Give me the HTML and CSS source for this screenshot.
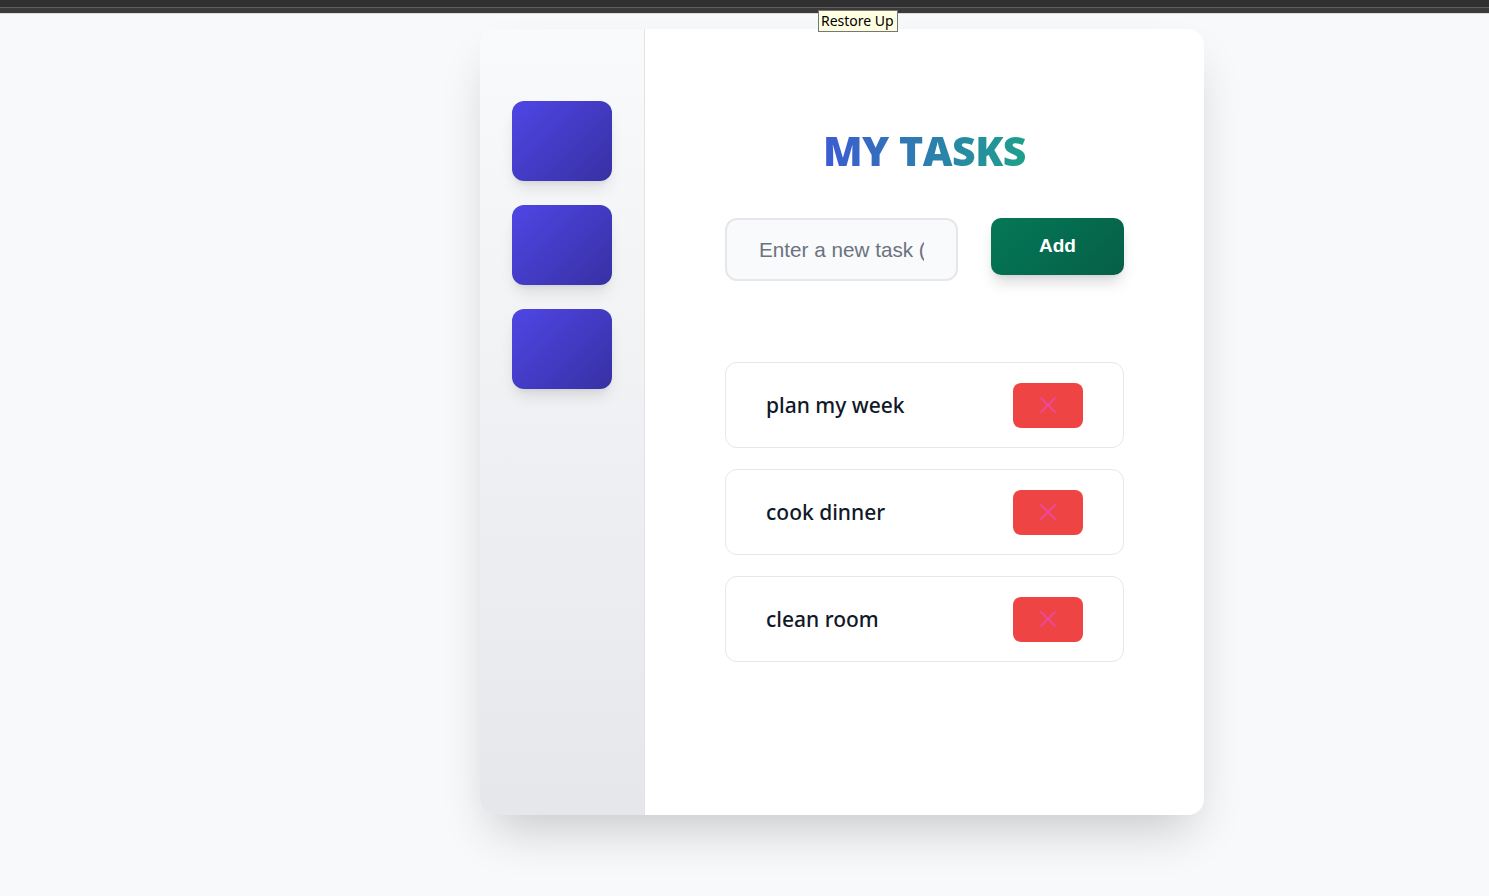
FILE: index.html
```html
<!DOCTYPE html>
<html lang="en">
<head>
<meta charset="utf-8">
<title>My Tasks</title>
<link rel="stylesheet" href="styles.css">
</head>
<body>
<div class="topbar"><div class="topbar-line"></div></div>
<div class="tooltip">Restore Up</div>
<div class="page">
  <div class="card">
    <aside class="sidebar">
      <div class="tile"></div>
      <div class="tile"></div>
      <div class="tile"></div>
    </aside>
    <main class="main">
      <h1 class="title">MY TASKS</h1>
      <div class="add-row">
        <input class="task-input" type="text" placeholder="Enter a new task (">
        <button class="add-btn">Add</button>
      </div>
      <ul class="tasks">
        <li class="task"><span class="task-text">plan my week</span><button class="del-btn"><svg width="18" height="18" viewBox="0 0 18 18"><path d="M2 2L16 16M16 2L2 16" stroke="#ec4899" stroke-width="2" stroke-linecap="round"/></svg></button></li>
        <li class="task"><span class="task-text">cook dinner</span><button class="del-btn"><svg width="18" height="18" viewBox="0 0 18 18"><path d="M2 2L16 16M16 2L2 16" stroke="#ec4899" stroke-width="2" stroke-linecap="round"/></svg></button></li>
        <li class="task"><span class="task-text">clean room</span><button class="del-btn"><svg width="18" height="18" viewBox="0 0 18 18"><path d="M2 2L16 16M16 2L2 16" stroke="#ec4899" stroke-width="2" stroke-linecap="round"/></svg></button></li>
      </ul>
    </main>
  </div>
</div>
</body>
</html>
```
FILE: styles.css
```css
* { box-sizing: border-box; }
html, body { margin: 0; padding: 0; }
body {
  background: #f8f9fb;
  font-family: "Noto Sans", "Open Sans", sans-serif;
  width: 1489px;
  height: 896px;
  overflow: hidden;
}
.topbar {
  height: 14px;
  background: #3a3a3a;
  border-top: 7px solid #303030;
  border-bottom: 1px solid #dcdcdc;
}
.topbar-line {
  height: 1px;
  background: #5e5e5e;
}
.tooltip {
  position: absolute;
  left: 818px;
  top: 10px;
  height: 22px;
  padding: 0 3px 0 2px;
  background: #ffffe1;
  border: 1px solid #767676;
  font-family: "Noto Sans", sans-serif;
  font-size: 14px;
  line-height: 20px;
  color: #000;
}
.page {
  padding-top: 15px;
  padding-left: 480px;
}
.card {
  width: 724px;
  height: 786px;
  display: flex;
  border-radius: 16px;
  overflow: hidden;
  background: #fff;
  box-shadow: 0 25px 50px -12px rgba(0, 0, 0, 0.2);
}
.sidebar {
  width: 165px;
  flex: none;
  padding: 72px 0 0 32px;
  display: flex;
  flex-direction: column;
  gap: 24px;
  background: linear-gradient(to bottom, #f9fafb, #e5e7eb);
  border-right: 1px solid #e2e4e8;
}
.tile {
  width: 100px;
  height: 80px;
  border-radius: 12px;
  background: linear-gradient(135deg, #4f46e5, #3730a3);
  box-shadow: 0 10px 15px -3px rgba(0, 0, 0, 0.1), 0 4px 6px -4px rgba(0, 0, 0, 0.1);
}
.main {
  flex: 1;
  padding: 0 80px;
  display: flex;
  flex-direction: column;
}
.title {
  margin: 93px 0 0;
  text-align: center;
  font-family: "Open Sans", sans-serif;
  font-weight: 800;
  font-size: 41px;
  line-height: 56px;
  letter-spacing: -0.5px;
  background: linear-gradient(to right, #3d5bd3, #1da08c);
  -webkit-background-clip: text;
  background-clip: text;
  color: transparent;
  align-self: center;
}
.add-row {
  margin-top: 40px;
  display: flex;
  align-items: flex-start;
  gap: 33px;
}
.task-input {
  width: 233px;
  height: 63px;
  border: 2px solid #e5e7eb;
  border-radius: 12px;
  background: #f9fafb;
  padding: 0 32px;
  font-family: "Liberation Sans", Arial, sans-serif;
  font-size: 20.7px;
  color: #111827;
  outline: none;
}
.task-input::placeholder { color: #6b7280; }
.add-btn {
  width: 133px;
  height: 57px;
  border: none;
  border-radius: 10px;
  background: linear-gradient(135deg, #047857, #065f46);
  color: #fff;
  font-family: "Liberation Sans", Arial, sans-serif;
  font-weight: 700;
  font-size: 19px;
  padding-bottom: 2px;
  box-shadow: 0 10px 15px -3px rgba(0, 0, 0, 0.15), 0 4px 6px -4px rgba(0, 0, 0, 0.1);
}
.tasks {
  list-style: none;
  margin: 81px 0 0;
  padding: 0;
  display: flex;
  flex-direction: column;
  gap: 21px;
}
.task {
  height: 86px;
  border: 1px solid #e5e7eb;
  border-radius: 12px;
  padding: 0 40px;
  display: flex;
  align-items: center;
  justify-content: space-between;
}
.task-text {
  font-family: "Noto Sans", sans-serif;
  font-size: 21px;
  font-weight: 500;
  color: #111827;
}
.del-btn {
  width: 70px;
  height: 45px;
  border: none;
  border-radius: 8px;
  background: #ef4444;
  display: flex;
  align-items: center;
  justify-content: center;
  padding: 0;
}
```
